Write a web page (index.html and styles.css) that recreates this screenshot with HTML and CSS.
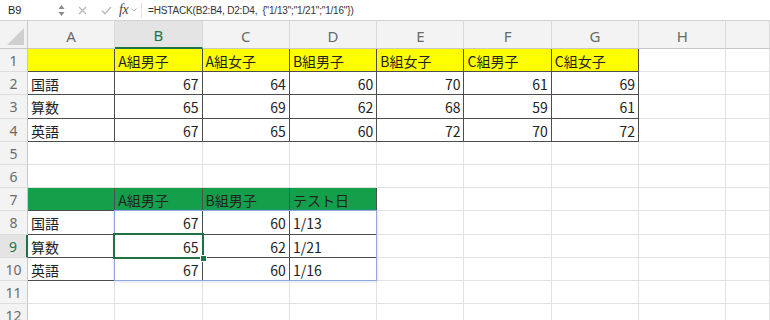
FILE: index.html
```html
<!DOCTYPE html>
<html lang="ja">
<head>
<meta charset="utf-8">
<link rel="stylesheet" href="styles.css">
</head>
<body>
<div class="app">
  <div class="fbar">
    <div class="namebox">B9</div>
    <div class="spin">
      <svg width="7" height="13" viewBox="0 0 7 13"><path d="M3.5 1 L6.5 5 L0.5 5 Z" fill="#8a8a8a"/><path d="M3.5 12 L6.5 8 L0.5 8 Z" fill="#8a8a8a"/></svg>
    </div>
    <div class="ficons">
      <svg class="ico-x" width="9" height="9" viewBox="0 0 9 9"><path d="M1 1 L8 8 M8 1 L1 8" stroke="#b9b9b9" stroke-width="1.3" fill="none"/></svg>
      <svg class="ico-ok" width="11" height="9" viewBox="0 0 11 9"><path d="M1 4.8 L4 7.8 L10 1" stroke="#b9b9b9" stroke-width="1.3" fill="none"/></svg>
      <span class="fx">fx</span>
      <svg class="ico-dd" width="6" height="4" viewBox="0 0 6 4"><path d="M0.5 0.5 L3 3 L5.5 0.5" stroke="#bdbdbd" stroke-width="1" fill="none"/></svg>
    </div>
    <div class="formula">=HSTACK(B2:B4, D2:D4,&nbsp; {"1/13";"1/21";"1/16"})</div>
  </div>

  <div class="sheetwrap">
    <div class="sheet">
      <div class="corner"><svg width="20" height="20" viewBox="0 0 20 20"><path d="M19 2 L19 19 L2 19 Z" fill="#cfcfcf"/></svg></div>
      <div class="ch">A</div><div class="ch on">B</div><div class="ch">C</div><div class="ch">D</div><div class="ch">E</div><div class="ch">F</div><div class="ch">G</div><div class="ch">H</div><div class="ch"></div>

      <div class="rh">1</div>
      <div class="c t y"></div><div class="c t y">A組男子</div><div class="c t y">A組女子</div><div class="c t y">B組男子</div><div class="c t y">B組女子</div><div class="c t y">C組男子</div><div class="c t y">C組女子</div><div class="c"></div><div class="c"></div>

      <div class="rh">2</div>
      <div class="c t">国語</div><div class="c t n">67</div><div class="c t n">64</div><div class="c t n">60</div><div class="c t n">70</div><div class="c t n">61</div><div class="c t n">69</div><div class="c"></div><div class="c"></div>

      <div class="rh">3</div>
      <div class="c t">算数</div><div class="c t n">65</div><div class="c t n">69</div><div class="c t n">62</div><div class="c t n">68</div><div class="c t n">59</div><div class="c t n">61</div><div class="c"></div><div class="c"></div>

      <div class="rh">4</div>
      <div class="c t">英語</div><div class="c t n">67</div><div class="c t n">65</div><div class="c t n">60</div><div class="c t n">72</div><div class="c t n">70</div><div class="c t n">72</div><div class="c"></div><div class="c"></div>

      <div class="rh">5</div>
      <div class="c"></div><div class="c"></div><div class="c"></div><div class="c"></div><div class="c"></div><div class="c"></div><div class="c"></div><div class="c"></div><div class="c"></div>

      <div class="rh">6</div>
      <div class="c"></div><div class="c"></div><div class="c"></div><div class="c"></div><div class="c"></div><div class="c"></div><div class="c"></div><div class="c"></div><div class="c"></div>

      <div class="rh">7</div>
      <div class="c t g"></div><div class="c t g">A組男子</div><div class="c t g">B組男子</div><div class="c t g">テスト日</div><div class="c"></div><div class="c"></div><div class="c"></div><div class="c"></div><div class="c"></div>

      <div class="rh">8</div>
      <div class="c t">国語</div><div class="c t n">67</div><div class="c t n">60</div><div class="c t">1/13</div><div class="c"></div><div class="c"></div><div class="c"></div><div class="c"></div><div class="c"></div>

      <div class="rh on">9</div>
      <div class="c t">算数</div><div class="c t n">65</div><div class="c t n">62</div><div class="c t">1/21</div><div class="c"></div><div class="c"></div><div class="c"></div><div class="c"></div><div class="c"></div>

      <div class="rh">10</div>
      <div class="c t">英語</div><div class="c t n">67</div><div class="c t n">60</div><div class="c t">1/16</div><div class="c"></div><div class="c"></div><div class="c"></div><div class="c"></div><div class="c"></div>

      <div class="rh">11</div>
      <div class="c"></div><div class="c"></div><div class="c"></div><div class="c"></div><div class="c"></div><div class="c"></div><div class="c"></div><div class="c"></div><div class="c"></div>

      <div class="rh">12</div>
      <div class="c"></div><div class="c"></div><div class="c"></div><div class="c"></div><div class="c"></div><div class="c"></div><div class="c"></div><div class="c"></div><div class="c"></div>
    </div>

    <div class="overlay">
      <div class="spill"></div>
      <div class="sel"><div class="handle"></div></div>
    </div>
  </div>
</div>
</body>
</html>
```

FILE: styles.css
```css
html, body {
  margin: 0;
  padding: 0;
  background: #ffffff;
}

body {
  font-family: "Noto Sans CJK JP", "Noto Sans", sans-serif;
}

.app {
  width: 770px;
  height: 320px;
  overflow: hidden;
  background: #ffffff;
}

/* formula bar */
.fbar {
  display: flex;
  align-items: center;
  height: 21px;
  box-sizing: border-box;
  border-bottom: 1px solid #d2d2d2;
  background: #ffffff;
}

.namebox {
  width: 50px;
  padding-left: 8px;
  font-family: "Liberation Sans", Arial, sans-serif;
  font-size: 11px;
  color: #222;
}

.spin {
  display: flex;
  align-items: center;
  height: 100%;
}

.ficons {
  display: flex;
  align-items: center;
  margin-left: 13px;
  padding-right: 4px;
  border-right: 1px solid #e2e2e2;
  height: 15px;
}

.ico-x {
  margin-right: 14px;
}

.ico-ok {
  margin-right: 7px;
}

.fx {
  font-family: "Liberation Serif", "DejaVu Serif", serif;
  font-style: italic;
  font-size: 14px;
  color: #444;
  line-height: 1;
  margin-right: 3px;
  letter-spacing: -0.5px;
}

.formula {
  margin-left: 6px;
  font-family: "Liberation Sans", Arial, sans-serif;
  font-size: 10px;
  letter-spacing: -0.18px;
  color: #333;
  white-space: nowrap;
}

/* sheet */
.sheetwrap {
  position: relative;
}

.sheet,
.overlay {
  display: grid;
  grid-template-columns: 28px repeat(8, 87.3px) 1fr;
  grid-template-rows: 28px repeat(12, 23.2px);
}

.overlay {
  position: absolute;
  inset: 0;
  pointer-events: none;
}

.corner {
  background: #f3f3f3;
  border-right: 1px solid #c8c8c8;
  border-bottom: 1px solid #c8c8c8;
  box-sizing: border-box;
  display: flex;
  align-items: flex-end;
  justify-content: flex-end;
  padding: 0 2px 2px 0;
}

.ch {
  background: #f3f3f3;
  border-right: 1px solid #d9d9d9;
  border-bottom: 1px solid #c8c8c8;
  box-sizing: border-box;
  display: flex;
  align-items: center;
  justify-content: center;
  font-family: "Noto Sans", "Liberation Sans", sans-serif;
  font-size: 15px;
  color: #6a6a6a;
  padding-top: 2px;
}

.ch.on {
  background: #e4e4e4;
  color: #1f7244;
  border-bottom: 2px solid #1f7244;
}

.rh {
  background: #f3f3f3;
  border-right: 1px solid #c8c8c8;
  border-bottom: 1px solid #dedede;
  box-sizing: border-box;
  display: flex;
  align-items: center;
  justify-content: center;
  font-family: "Noto Sans", "Liberation Sans", sans-serif;
  font-size: 14px;
  color: #6a6a6a;
  padding-top: 1px;
}

.rh.on {
  background: #e4e4e4;
  color: #1f7244;
  border-right: 2px solid #1f7244;
}

.c {
  border-right: 1px solid #e2e2e2;
  border-bottom: 1px solid #e2e2e2;
  box-sizing: border-box;
  display: flex;
  align-items: center;
  padding: 2px 3px 0 3px;
  font-size: 14px;
  line-height: 1;
  color: #222;
  white-space: nowrap;
  overflow: hidden;
}

.c.t {
  border-right-color: #4d4d4d;
  border-bottom-color: #4d4d4d;
}

.c.n {
  justify-content: flex-end;
}

.c.y {
  background: #ffff00;
}

.c.g {
  background: #14a04b;
}

/* overlays */
.spill {
  grid-area: 9 / 3 / 12 / 6;
  margin: -1px 0 0 -1px;
  border: 1px solid #8ea9dc;
  box-shadow: 0 0 3px rgba(90, 130, 220, 0.35);
}

.sel {
  grid-area: 10 / 3 / 11 / 4;
  margin: -2px -1px -1px -2px;
  border: 2px solid #1f7244;
  position: relative;
}

.handle {
  position: absolute;
  right: -5px;
  bottom: -5px;
  width: 5px;
  height: 5px;
  background: #1f7244;
  border: 1px solid #ffffff;
}
```
